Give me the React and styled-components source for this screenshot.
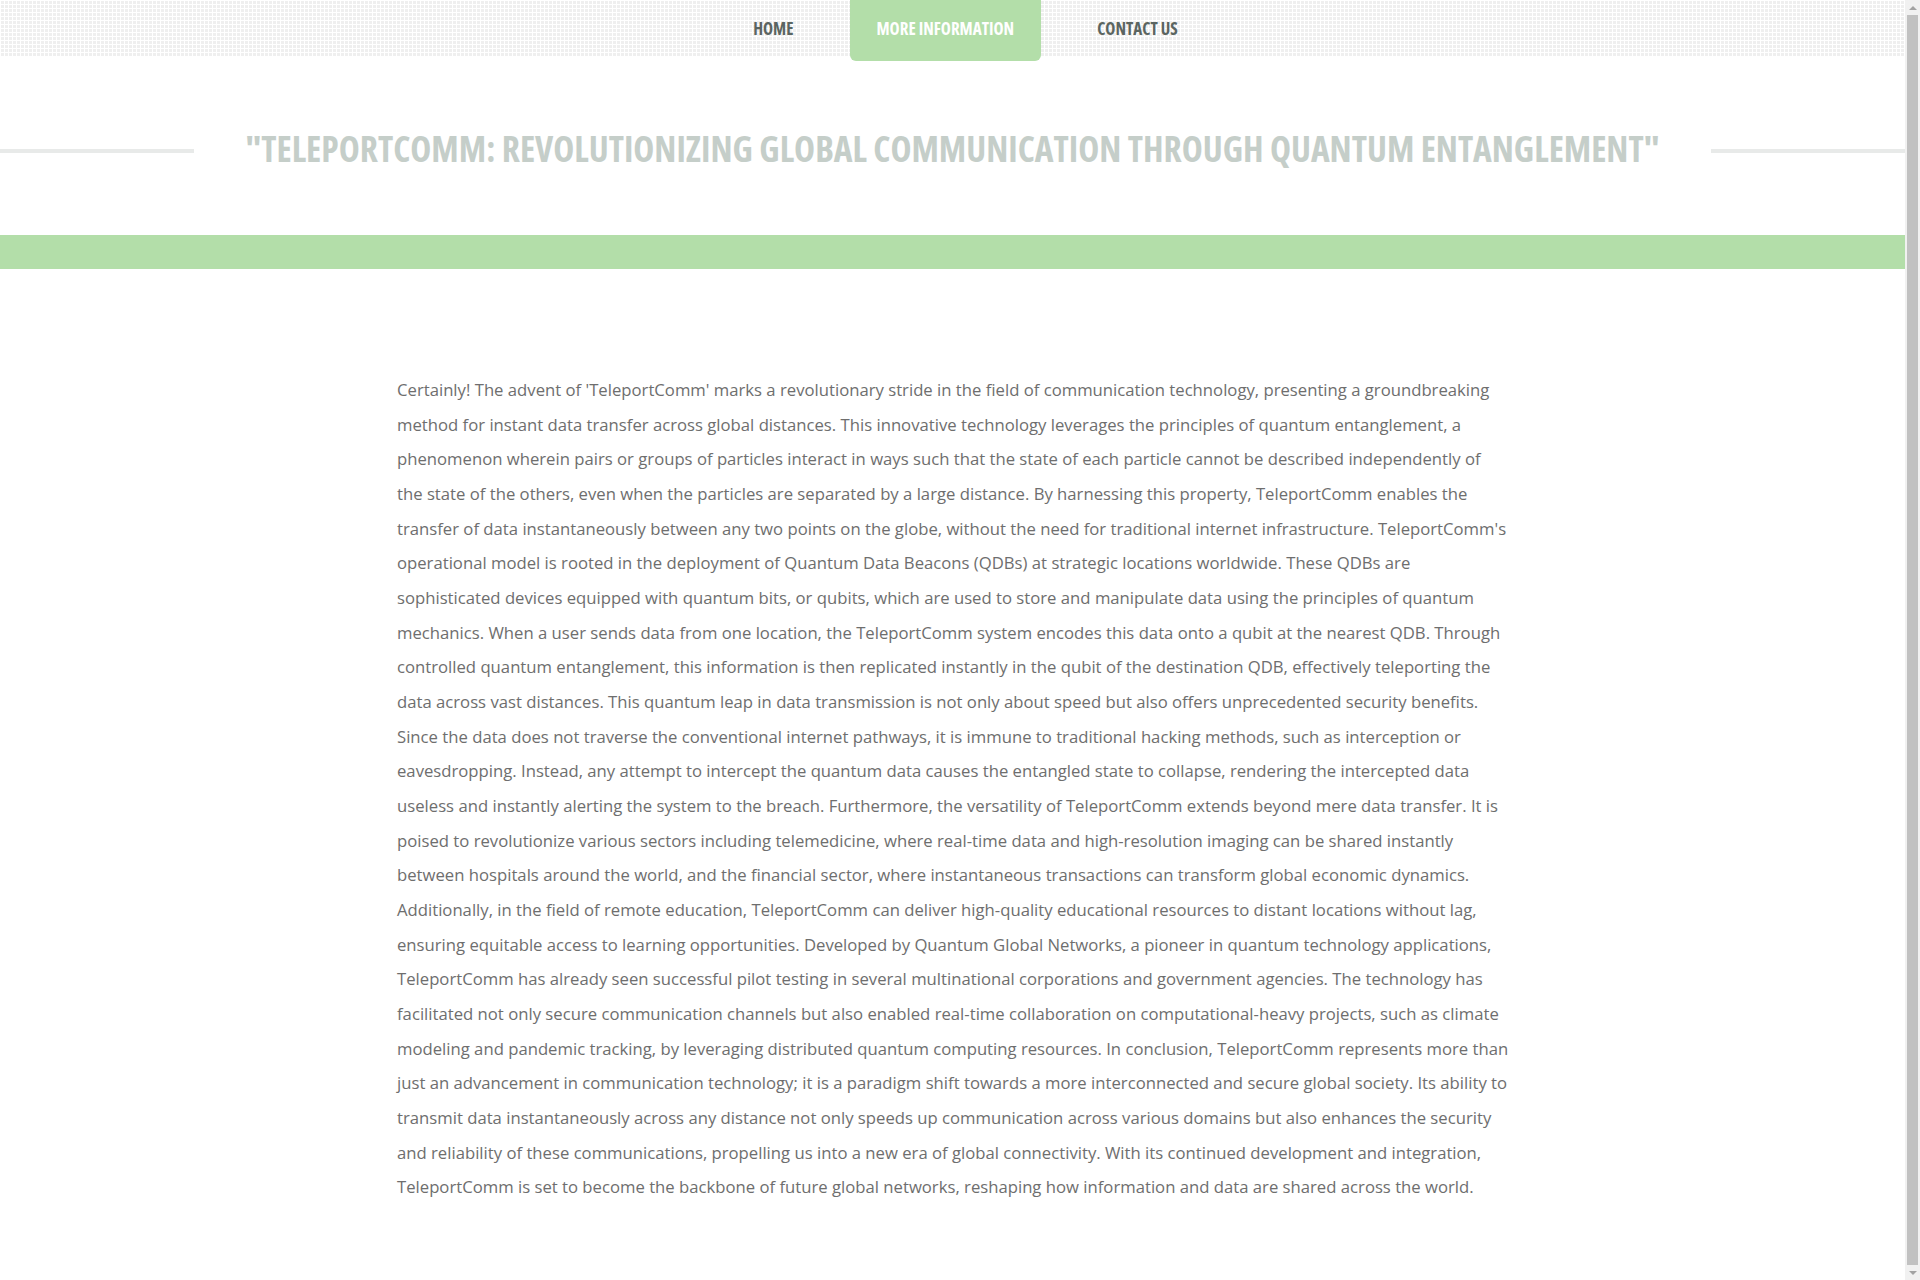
import React from "react"
import styled, { createGlobalStyle } from "styled-components"

const GlobalStyle = createGlobalStyle`
    html, body {
        margin: 0;
        padding: 0;
        background: #fff;
    }
    body {
        font-family: "Open Sans", "Liberation Sans", sans-serif;
    }
`

const navItems = [
    { label: "HOME" },
    { label: "MORE INFORMATION", active: true },
    { label: "CONTACT US" },
]

const text = `Certainly! The advent of 'TeleportComm' marks a revolutionary stride in the field of communication technology, presenting a groundbreaking method for instant data transfer across global distances. This innovative technology leverages the principles of quantum entanglement, a phenomenon wherein pairs or groups of particles interact in ways such that the state of each particle cannot be described independently of the state of the others, even when the particles are separated by a large distance. By harnessing this property, TeleportComm enables the transfer of data instantaneously between any two points on the globe, without the need for traditional internet infrastructure. TeleportComm's operational model is rooted in the deployment of Quantum Data Beacons (QDBs) at strategic locations worldwide. These QDBs are sophisticated devices equipped with quantum bits, or qubits, which are used to store and manipulate data using the principles of quantum mechanics. When a user sends data from one location, the TeleportComm system encodes this data onto a qubit at the nearest QDB. Through controlled quantum entanglement, this information is then replicated instantly in the qubit of the destination QDB, effectively teleporting the data across vast distances. This quantum leap in data transmission is not only about speed but also offers unprecedented security benefits. Since the data does not traverse the conventional internet pathways, it is immune to traditional hacking methods, such as interception or eavesdropping. Instead, any attempt to intercept the quantum data causes the entangled state to collapse, rendering the intercepted data useless and instantly alerting the system to the breach. Furthermore, the versatility of TeleportComm extends beyond mere data transfer. It is poised to revolutionize various sectors including telemedicine, where real-time data and high-resolution imaging can be shared instantly between hospitals around the world, and the financial sector, where instantaneous transactions can transform global economic dynamics. Additionally, in the field of remote education, TeleportComm can deliver high-quality educational resources to distant locations without lag, ensuring equitable access to learning opportunities. Developed by Quantum Global Networks, a pioneer in quantum technology applications, TeleportComm has already seen successful pilot testing in several multinational corporations and government agencies. The technology has facilitated not only secure communication channels but also enabled real-time collaboration on computational-heavy projects, such as climate modeling and pandemic tracking, by leveraging distributed quantum computing resources. In conclusion, TeleportComm represents more than just an advancement in communication technology; it is a paradigm shift towards a more interconnected and secure global society. Its ability to transmit data instantaneously across any distance not only speeds up communication across various domains but also enhances the security and reliability of these communications, propelling us into a new era of global connectivity. With its continued development and integration, TeleportComm is set to become the backbone of future global networks, reshaping how information and data are shared across the world.`

const App = () => {
    return (
        <>
            <GlobalStyle />
            <Page>
                <Header>
                    <Nav>
                        {navItems.map(item => (
                            <NavLink key={item.label} href="#" $active={item.active}>
                                {item.label}
                            </NavLink>
                        ))}
                    </Nav>
                </Header>
                <TitleSection>
                    <Rule />
                    <Title>"TeleportComm: Revolutionizing Global Communication through Quantum Entanglement"</Title>
                    <Rule />
                </TitleSection>
                <Band />
                <Main>
                    <Container>
                        <Paragraph>{text}</Paragraph>
                    </Container>
                </Main>
            </Page>
            <Scrollbar>
                <Arrow $dir="up" />
                <Thumb />
                <Arrow $dir="down" />
            </Scrollbar>
        </>
    )
}

export default App

const Page = styled.div`
    margin-right: 15px;
`

const Header = styled.header`
    height: 56px;
    background-color: #efefef;
    background-image:
        linear-gradient(to right, #fff 1px, transparent 1px),
        linear-gradient(to bottom, #fff 1px, transparent 1px);
    background-size: 4px 4px;
`

const Nav = styled.nav`
    display: flex;
    justify-content: center;
    align-items: flex-start;
    gap: 29px;
    padding-left: 26px;
`

const NavLink = styled.a`
    display: block;
    padding: 1px 27px ${props => props.$active ? "4px" : "0"};
    line-height: 56px;
    font-family: "Open Sans", "Liberation Sans", sans-serif;
    font-stretch: 75%;
    font-weight: 700;
    font-size: 17px;
    text-decoration: none;
    text-transform: uppercase;
    color: ${props => props.$active ? "#fff" : "#5b6561"};
    background: ${props => props.$active ? "#b3dea9" : "transparent"};
    border-radius: 0 0 6px 6px;
`

const TitleSection = styled.section`
    height: 179px;
    box-sizing: border-box;
    padding-top: 5px;
    display: flex;
    align-items: center;
`

const Rule = styled.div`
    flex: 1;
    height: 4px;
    margin-top: 6px;
    background: #e8eae9;
`

const Title = styled.h1`
    margin: 0 52px;
    white-space: nowrap;
    font-family: "Open Sans", "Liberation Sans", sans-serif;
    font-stretch: 75%;
    font-weight: 700;
    font-size: 35.5px;
    line-height: 1.2;
    text-transform: uppercase;
    color: #c5cec9;
`

const Band = styled.div`
    height: 34px;
    background: #b3dea9;
`

const Main = styled.main`
    padding: 104px 0 100px;
`

const Container = styled.div`
    width: 1113px;
    margin: 0 auto;
    padding-left: 2px;
`

const Paragraph = styled.p`
    margin: 0;
    font-size: 16.7px;
    line-height: 34.67px;
    color: #6e6e6e;
`

const Scrollbar = styled.div`
    position: fixed;
    top: 0;
    right: 0;
    width: 15px;
    height: 100vh;
    background: #f1f1f1;
    display: flex;
    flex-direction: column;
`

const Thumb = styled.div`
    flex: 1;
    margin: 0 2px;
    background: #c1c1c1;
`

const Arrow = styled.div`
    height: 15px;
    display: flex;
    align-items: center;
    justify-content: center;

    &::before {
        content: "";
        border-left: 4px solid transparent;
        border-right: 4px solid transparent;
        ${props => props.$dir === "up"
            ? "border-bottom: 4px solid #a3a3a3;"
            : "border-top: 4px solid #a3a3a3;"}
    }
`
